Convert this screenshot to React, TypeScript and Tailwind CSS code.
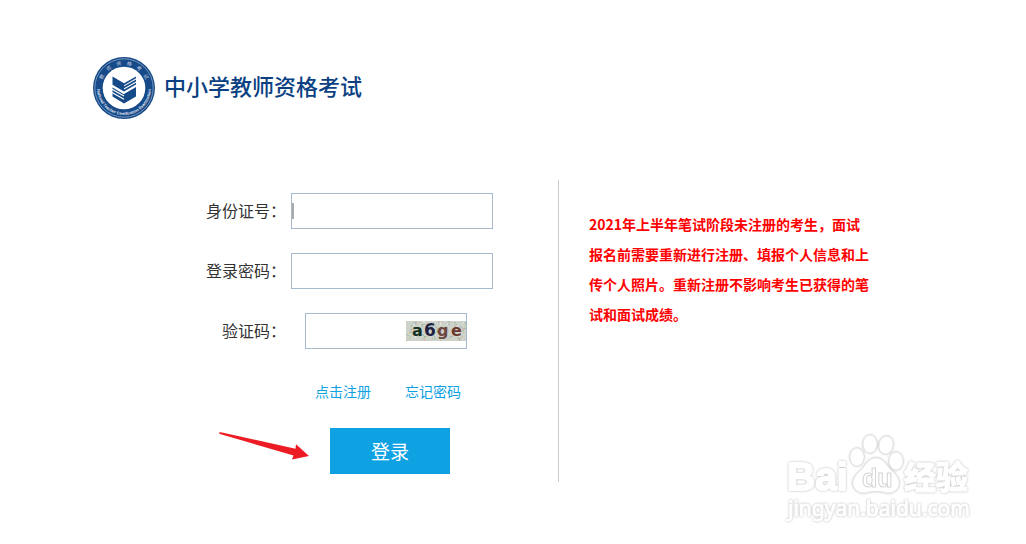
import React, {useId, useState} from 'react';

interface FormRowProps {
    label: string;
    htmlFor: string;
    gap?: string;
    children: React.ReactNode;
}

// short strokes scattered behind the captcha letters
const noiseColors: string[] = ["#9fb8a4", "#d9b9a8", "#a9b4c0", "#c7cfa4", "#eef1ea", "#b5a9a6"];
const noise = Array.from({length: 120}, (_, i) => ({
    x: (i * 37) % 60,
    y: (i * 13 + Math.floor(i / 7) * 5) % 20,
    dx: ((i * 5) % 7) - 3,
    dy: ((i * 11) % 7) - 3,
    color: noiseColors[(i * 5 + Math.floor(i / 4)) % noiseColors.length],
}));

const Logo = () => {
    const topId: string = useId();
    const bottomId: string = useId();

    return (
        <svg className="shrink-0" width="62" height="62" viewBox="0 0 62 62" role="img" aria-label="教师资格考试">
            <defs>
                <path id={topId} d="M8 31a23 23 0 0 1 46 0"/>
                <path id={bottomId} d="M4 31a27 27 0 0 0 54 0"/>
            </defs>
            <circle cx="31" cy="31" r="31" fill="#174a88"/>
            <circle cx="31" cy="31" r="29.2" fill="none" stroke="#8ba7c8" strokeWidth="0.8"/>
            <circle cx="31" cy="31" r="21.3" fill="#fff"/>
            <text fill="#c3d2e4" fontSize="5" fontFamily="Noto Sans CJK SC, sans-serif">
                <textPath href={`#${topId}`} startOffset="50%" textAnchor="middle">教　师　资　格　考　试</textPath>
            </text>
            <text fill="#e6edf5" fontSize="4" fontWeight="bold" fontFamily="Liberation Sans, sans-serif">
                <textPath href={`#${bottomId}`} startOffset="50%" textAnchor="middle">National Teacher Certification Examination</textPath>
            </text>
            <g transform="translate(0 1)">
                <g fill="#174a88">
                    <path d="M19.5 18.5L31 25.2V33.5L19.5 26.8z"/>
                    <path d="M31 25.2l12-6.7v1.8L31 27.2z"/>
                    <path d="M31 28.3l12-6.7v1.8L31 30.3z"/>
                    <path d="M31 31.4l12-6.7v1.8L31 33.4z"/>
                    <path d="M31 36l12-7v9.4l-12 7.1z"/>
                    <path d="M19.5 29.6l11.5 6.6v9.3l-11.5-7.1z"/>
                </g>
                <path d="M19 31.2l12 6.9M19 34.4l12 6.9" stroke="#fff" strokeWidth="1.2"/>
            </g>
        </svg>
    );
};

const Captcha = () => (
    <svg className="shrink-0" width="60" height="20" viewBox="0 0 60 20" role="img" aria-label="a6ge">
        <rect width="60" height="20" fill="#cdd3cb"/>
        {
            noise.map((n, index) => (
                <path key={index} d={`M${n.x} ${n.y}l${n.dx} ${n.dy}`} stroke={n.color} strokeWidth="1"/>
            ))
        }
        <g fontFamily="DejaVu Sans, sans-serif" fontSize="16" fontWeight="bold">
            <text x="6" y="15" fill="#12301f">a</text>
            <text x="18" y="15" fontSize="17" fill="#1f1f42">6</text>
            <text x="31" y="15" fill="#6d4740">g</text>
            <text x="45" y="15" fill="#6b3a2c">e</text>
        </g>
    </svg>
);

const Arrow = () => (
    <svg className="shrink-0" width="90" height="28" viewBox="0 0 90 28" aria-hidden="true">
        <path d="M0 0.5Q1 0 3 0.5L76.5 16.8L77 12.3L90 24L73 27.5L74.5 23.5L1 2Q0 1.5 0 0.5z" fill="#ed1c24"/>
    </svg>
);

const Watermark = () => (
    <svg className="pointer-events-none absolute right-[52px] bottom-[16px] drop-shadow-[0_0_1px_#b8b8b8]" width="190" height="96" viewBox="0 0 190 96" aria-hidden="true">
        <g fill="#fff" stroke="#fff" strokeLinejoin="round">
            <text x="3" y="58" fontSize="39" strokeWidth="2" fontWeight="bold" fontFamily="Liberation Sans, sans-serif">Bai</text>
            <text x="120" y="57" fontSize="32" strokeWidth="1" fontWeight="900" fontFamily="Noto Sans CJK SC, sans-serif">经验</text>
            <text x="4" y="84" fontSize="21" strokeWidth="1" fontFamily="Noto Sans, sans-serif">jingyan.baidu.com</text>
        </g>
        <g fill="#fff" stroke="#e2e2e2" strokeWidth="0.6">
            <ellipse cx="73" cy="25" rx="7" ry="9"/>
            <ellipse cx="86" cy="12" rx="7" ry="9"/>
            <ellipse cx="102" cy="13" rx="7" ry="9" transform="rotate(10 102 13)"/>
            <ellipse cx="112" cy="29" rx="7" ry="9"/>
            <path d="M92 26c-8 0-10 7-15 12c-5 4-9 9-8 15c2 8 10 9 16 7c5-1 9-1 14 0c6 2 14 1 16-7c1-6-3-11-8-15c-5-5-7-12-15-12z"/>
        </g>
        <text x="78" y="55" fontSize="25" fill="#fff" stroke="#d4d4d4" strokeWidth="1" fontWeight="bold" fontFamily="Liberation Sans, sans-serif">du</text>
    </svg>
);

const FormRow = ({label, htmlFor, gap = "gap-1", children}: FormRowProps) => (
    <div className={`flex items-center ${gap}`}>
        <label className="w-[194px] pr-px pb-0.5 text-right text-base whitespace-nowrap text-[#333]" htmlFor={htmlFor}>
            {label}
        </label>
        {children}
    </div>
);

const App = () => {
    const [idNumber, setIdNumber] = useState<string>('');
    const [password, setPassword] = useState<string>('');
    const [code, setCode] = useState<string>('');

    return (
        <div lang="zh-CN" className="relative min-h-screen bg-white px-[93px] pt-[57px] pb-[62px] font-['Noto_Sans_CJK_SC',sans-serif]">
            <header className="flex items-center gap-[9px]">
                <Logo/>
                <h1 className="pb-1.5 text-[22px] leading-8 font-medium text-[#0b4182]">中小学教师资格考试</h1>
            </header>

            <main className="mt-[61px] flex">
                <form className="w-[466px] shrink-0 border-r border-[#ccc] pt-[13px] pb-2" onSubmit={(event: React.FormEvent) => event.preventDefault()}>
                    <div className="flex flex-col gap-6">
                        <FormRow label="身份证号：" htmlFor="idNumber">
                            <div className="flex h-9 w-[202px] items-center border border-[#a5bacf]">
                                {!idNumber && <span className="h-4 w-0.5 bg-[#aaa]"/>}
                                <input
                                    className="h-full w-full min-w-0 px-1 text-base focus:outline-none"
                                    type="text"
                                    id="idNumber"
                                    value={idNumber}
                                    onChange={(event: React.ChangeEvent<HTMLInputElement>) => setIdNumber(event.target.value)}
                                />
                            </div>
                        </FormRow>
                        <FormRow label="登录密码：" htmlFor="password">
                            <input
                                className="h-9 w-[202px] border border-[#a5bacf] px-1 text-base focus:outline-none"
                                type="password"
                                id="password"
                                value={password}
                                onChange={(event: React.ChangeEvent<HTMLInputElement>) => setPassword(event.target.value)}
                            />
                        </FormRow>
                        <FormRow label="验证码：" htmlFor="code" gap="gap-[18px]">
                            <div className="flex h-9 w-[162px] items-center border border-[#a5bacf]">
                                <input
                                    className="h-full min-w-0 flex-1 px-1 text-base focus:outline-none"
                                    type="text"
                                    id="code"
                                    value={code}
                                    onChange={(event: React.ChangeEvent<HTMLInputElement>) => setCode(event.target.value)}
                                />
                                <Captcha/>
                            </div>
                        </FormRow>
                    </div>

                    <div className="mt-[30px] flex gap-[34px] pl-[222px] text-sm leading-6 text-[#0fa2e3]">
                        <a href="#register">点击注册</a>
                        <a href="#forgot">忘记密码</a>
                    </div>

                    <div className="mt-[25px] flex items-start gap-[21px] pl-[126px]">
                        <div className="pt-1">
                            <Arrow/>
                        </div>
                        <button className="h-[46px] w-[120px] bg-[#0fa2e3] text-[19px] text-white" type="submit">登录</button>
                    </div>
                </form>

                <p className="max-w-[312px] pt-[29px] pl-[30px] text-sm leading-[30px] font-bold text-[#f00]">
                    2021年上半年笔试阶段未注册的考生，面试报名前需要重新进行注册、填报个人信息和上传个人照片。重新注册不影响考生已获得的笔试和面试成绩。
                </p>
            </main>

            <Watermark/>
        </div>
    );
};

export default App;
